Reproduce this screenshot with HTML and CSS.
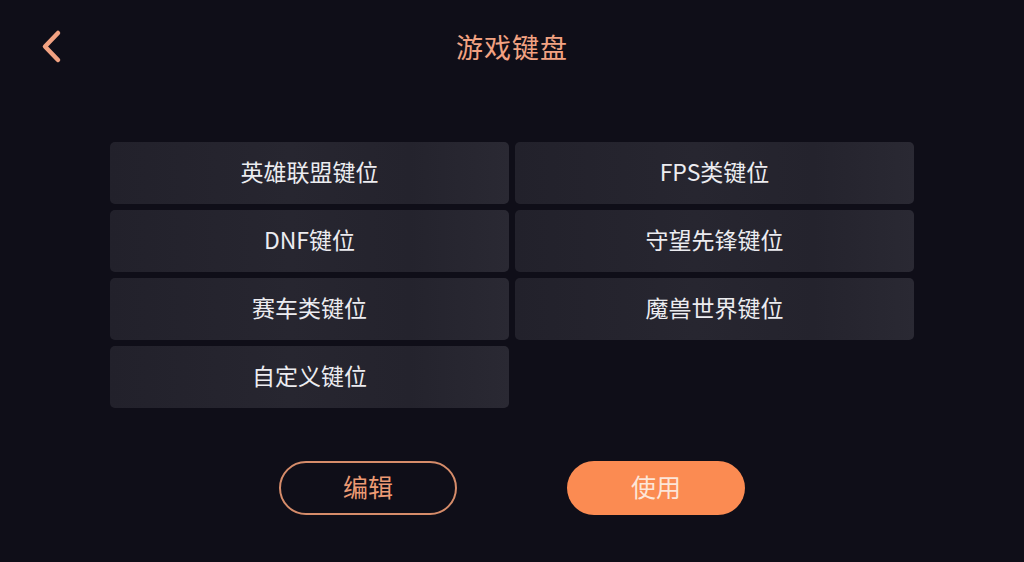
FILE: index.html
```html
<!DOCTYPE html>
<html lang="zh-CN">
<head>
<meta charset="utf-8">
<link rel="stylesheet" href="styles.css">
</head>
<body>
<div class="page">
  <header class="header">
    <button class="back" aria-label="返回">
      <svg width="26" height="36" viewBox="0 0 26 36"><path d="M19 4 L6 17.5 L19 31" fill="none" stroke="#f2a282" stroke-width="4.5" stroke-linecap="round" stroke-linejoin="round"/></svg>
    </button>
    <h1 class="title">游戏键盘</h1>
    <div></div>
  </header>
  <main class="grid">
    <div class="card">英雄联盟键位</div>
    <div class="card">FPS类键位</div>
    <div class="card">DNF键位</div>
    <div class="card">守望先锋键位</div>
    <div class="card">赛车类键位</div>
    <div class="card">魔兽世界键位</div>
    <div class="card">自定义键位</div>
  </main>
  <footer class="actions">
    <button class="btn btn-outline">编辑</button>
    <button class="btn btn-fill">使用</button>
  </footer>
</div>
</body>
</html>
```

FILE: styles.css
```css
* { box-sizing: border-box; }
html, body {
  margin: 0;
  padding: 0;
  background: #0f0e18;
  font-family: "Noto Sans CJK SC", "Noto Sans", sans-serif;
}
.page {
  width: 1024px;
  height: 562px;
  display: flex;
  flex-direction: column;
  align-items: center;
}
.header {
  width: 100%;
  height: 96px;
  display: grid;
  grid-template-columns: 1fr auto 1fr;
  align-items: center;
}
.back {
  justify-self: start;
  margin-left: 39px;
  margin-top: -2px;
  background: none;
  border: 0;
  padding: 0;
  display: flex;
}
.title {
  margin: 0;
  padding-bottom: 3px;
  font-size: 27px;
  font-weight: 400;
  color: #f2a282;
  letter-spacing: 1px;
}
.grid {
  margin-top: 46px;
  width: 804px;
  display: grid;
  grid-template-columns: 399px 399px;
  grid-auto-rows: 62px;
  column-gap: 6px;
  row-gap: 6px;
}
.card {
  border-radius: 5px;
  background: linear-gradient(90deg, #22212b 0%, #272630 45%, #24232d 75%, #2a2933 100%);
  color: #ececf0;
  font-size: 23px;
  padding-bottom: 4px;
  display: flex;
  align-items: center;
  justify-content: center;
}
.actions {
  margin-top: 53px;
  display: flex;
  gap: 110px;
}
.btn {
  width: 178px;
  height: 54px;
  border-radius: 27px;
  font-family: inherit;
  font-size: 25px;
  padding: 0 0 4px 0;
  display: flex;
  align-items: center;
  justify-content: center;
}
.btn-outline {
  background: transparent;
  border: 2px solid #d68c6a;
  color: #ec9a74;
}
.btn-fill {
  background: #fb8b52;
  border: 0;
  color: #fde6d8;
}
```
